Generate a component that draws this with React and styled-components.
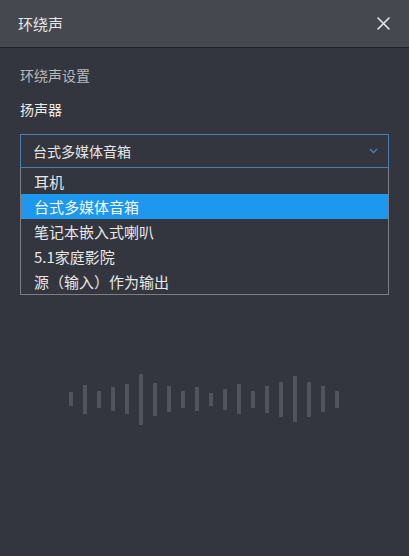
import styled, { createGlobalStyle } from 'styled-components'

const GlobalStyle = createGlobalStyle`
  html, body {
    margin: 0;
    padding: 0;
    background: #33363e;
  }
  body {
    font-family: "Noto Sans CJK SC", "Noto Sans", sans-serif;
  }
`

const Panel = styled.div`
  width: 409px;
  height: 556px;
  background: #33363e;
  display: flex;
  flex-direction: column;
  overflow: hidden;
`

const Header = styled.div`
  height: 48px;
  background: #45484f;
  border-bottom: 1px solid #1f2125;
  display: flex;
  align-items: center;
  justify-content: space-between;
  padding: 0 18px 0 18px;
  box-sizing: border-box;
`

const Title = styled.div`
  color: #e6e6e6;
  font-size: 15px;
  line-height: 1;
`

const CloseButton = styled.button`
  border: 0;
  background: none;
  padding: 0;
  width: 16px;
  height: 16px;
  display: flex;
  align-items: center;
  justify-content: center;
  cursor: pointer;
`

const Body = styled.div`
  padding: 17px 20px 0 20px;
  display: flex;
  flex-direction: column;
`

const Label = styled.div`
  color: ${(props) => (props.dim ? '#b8b9bc' : '#e9e9ea')};
  font-size: 14px;
  line-height: 20px;
  margin-bottom: ${(props) => props.gap || '0'};
`

const Select = styled.div`
  margin-top: 15px;
  height: 34px;
  border: 1px solid #4b7eab;
  box-sizing: border-box;
  display: flex;
  align-items: center;
  justify-content: space-between;
  padding: 0 10px 0 12px;
  color: #e6e6e6;
  font-size: 14px;
`

const Options = styled.ul`
  list-style: none;
  margin: 0;
  padding: 1px 0 0;
  border: 1px solid #7c7e84;
  border-top: 0;
  box-sizing: border-box;
  background: #33363e;
`

const Option = styled.li`
  height: 25px;
  line-height: 25px;
  padding-left: 13px;
  font-size: 15px;
  color: ${(props) => (props.active ? '#f4f8ff' : '#e8e8e8')};
  background: ${(props) => (props.active ? '#1e97ef' : 'transparent')};
`

const Wave = styled.div`
  margin-top: 77px;
  height: 54px;
  display: flex;
  align-items: center;
  justify-content: center;
  gap: 10px;
  padding-right: 2px;
`

const Bar = styled.span`
  width: 4px;
  background: #51545c;
`

const bars = [14, 29, 17, 24, 30, 51, 33, 26, 17, 24, 13, 21, 30, 17, 27, 35, 46, 35, 26, 17]

const items = ['耳机', '台式多媒体音箱', '笔记本嵌入式喇叭', '5.1家庭影院', '源（输入）作为输出']

function App() {
  return (
    <>
      <GlobalStyle />
      <Panel>
        <Header>
          <Title>环绕声</Title>
          <CloseButton>
            <svg width="13" height="13" viewBox="0 0 13 13">
              <path d="M1 1 L12 12 M12 1 L1 12" stroke="#e8e8e8" strokeWidth="1.6" strokeLinecap="round" />
            </svg>
          </CloseButton>
        </Header>
        <Body>
          <Label dim gap="14px">环绕声设置</Label>
          <Label>扬声器</Label>
          <Select>
            <span>台式多媒体音箱</span>
            <svg width="9" height="6" viewBox="0 0 9 6">
              <path d="M1 1 L4.5 4.5 L8 1" stroke="#4d82b4" strokeWidth="1.4" fill="none" />
            </svg>
          </Select>
          <Options>
            {items.map((it, i) => (
              <Option key={it} active={i === 1}>
                {it}
              </Option>
            ))}
          </Options>
          <Wave>
            {bars.map((h, i) => (
              <Bar key={i} style={{ height: h + 'px' }} />
            ))}
          </Wave>
        </Body>
      </Panel>
    </>
  )
}

export default App
